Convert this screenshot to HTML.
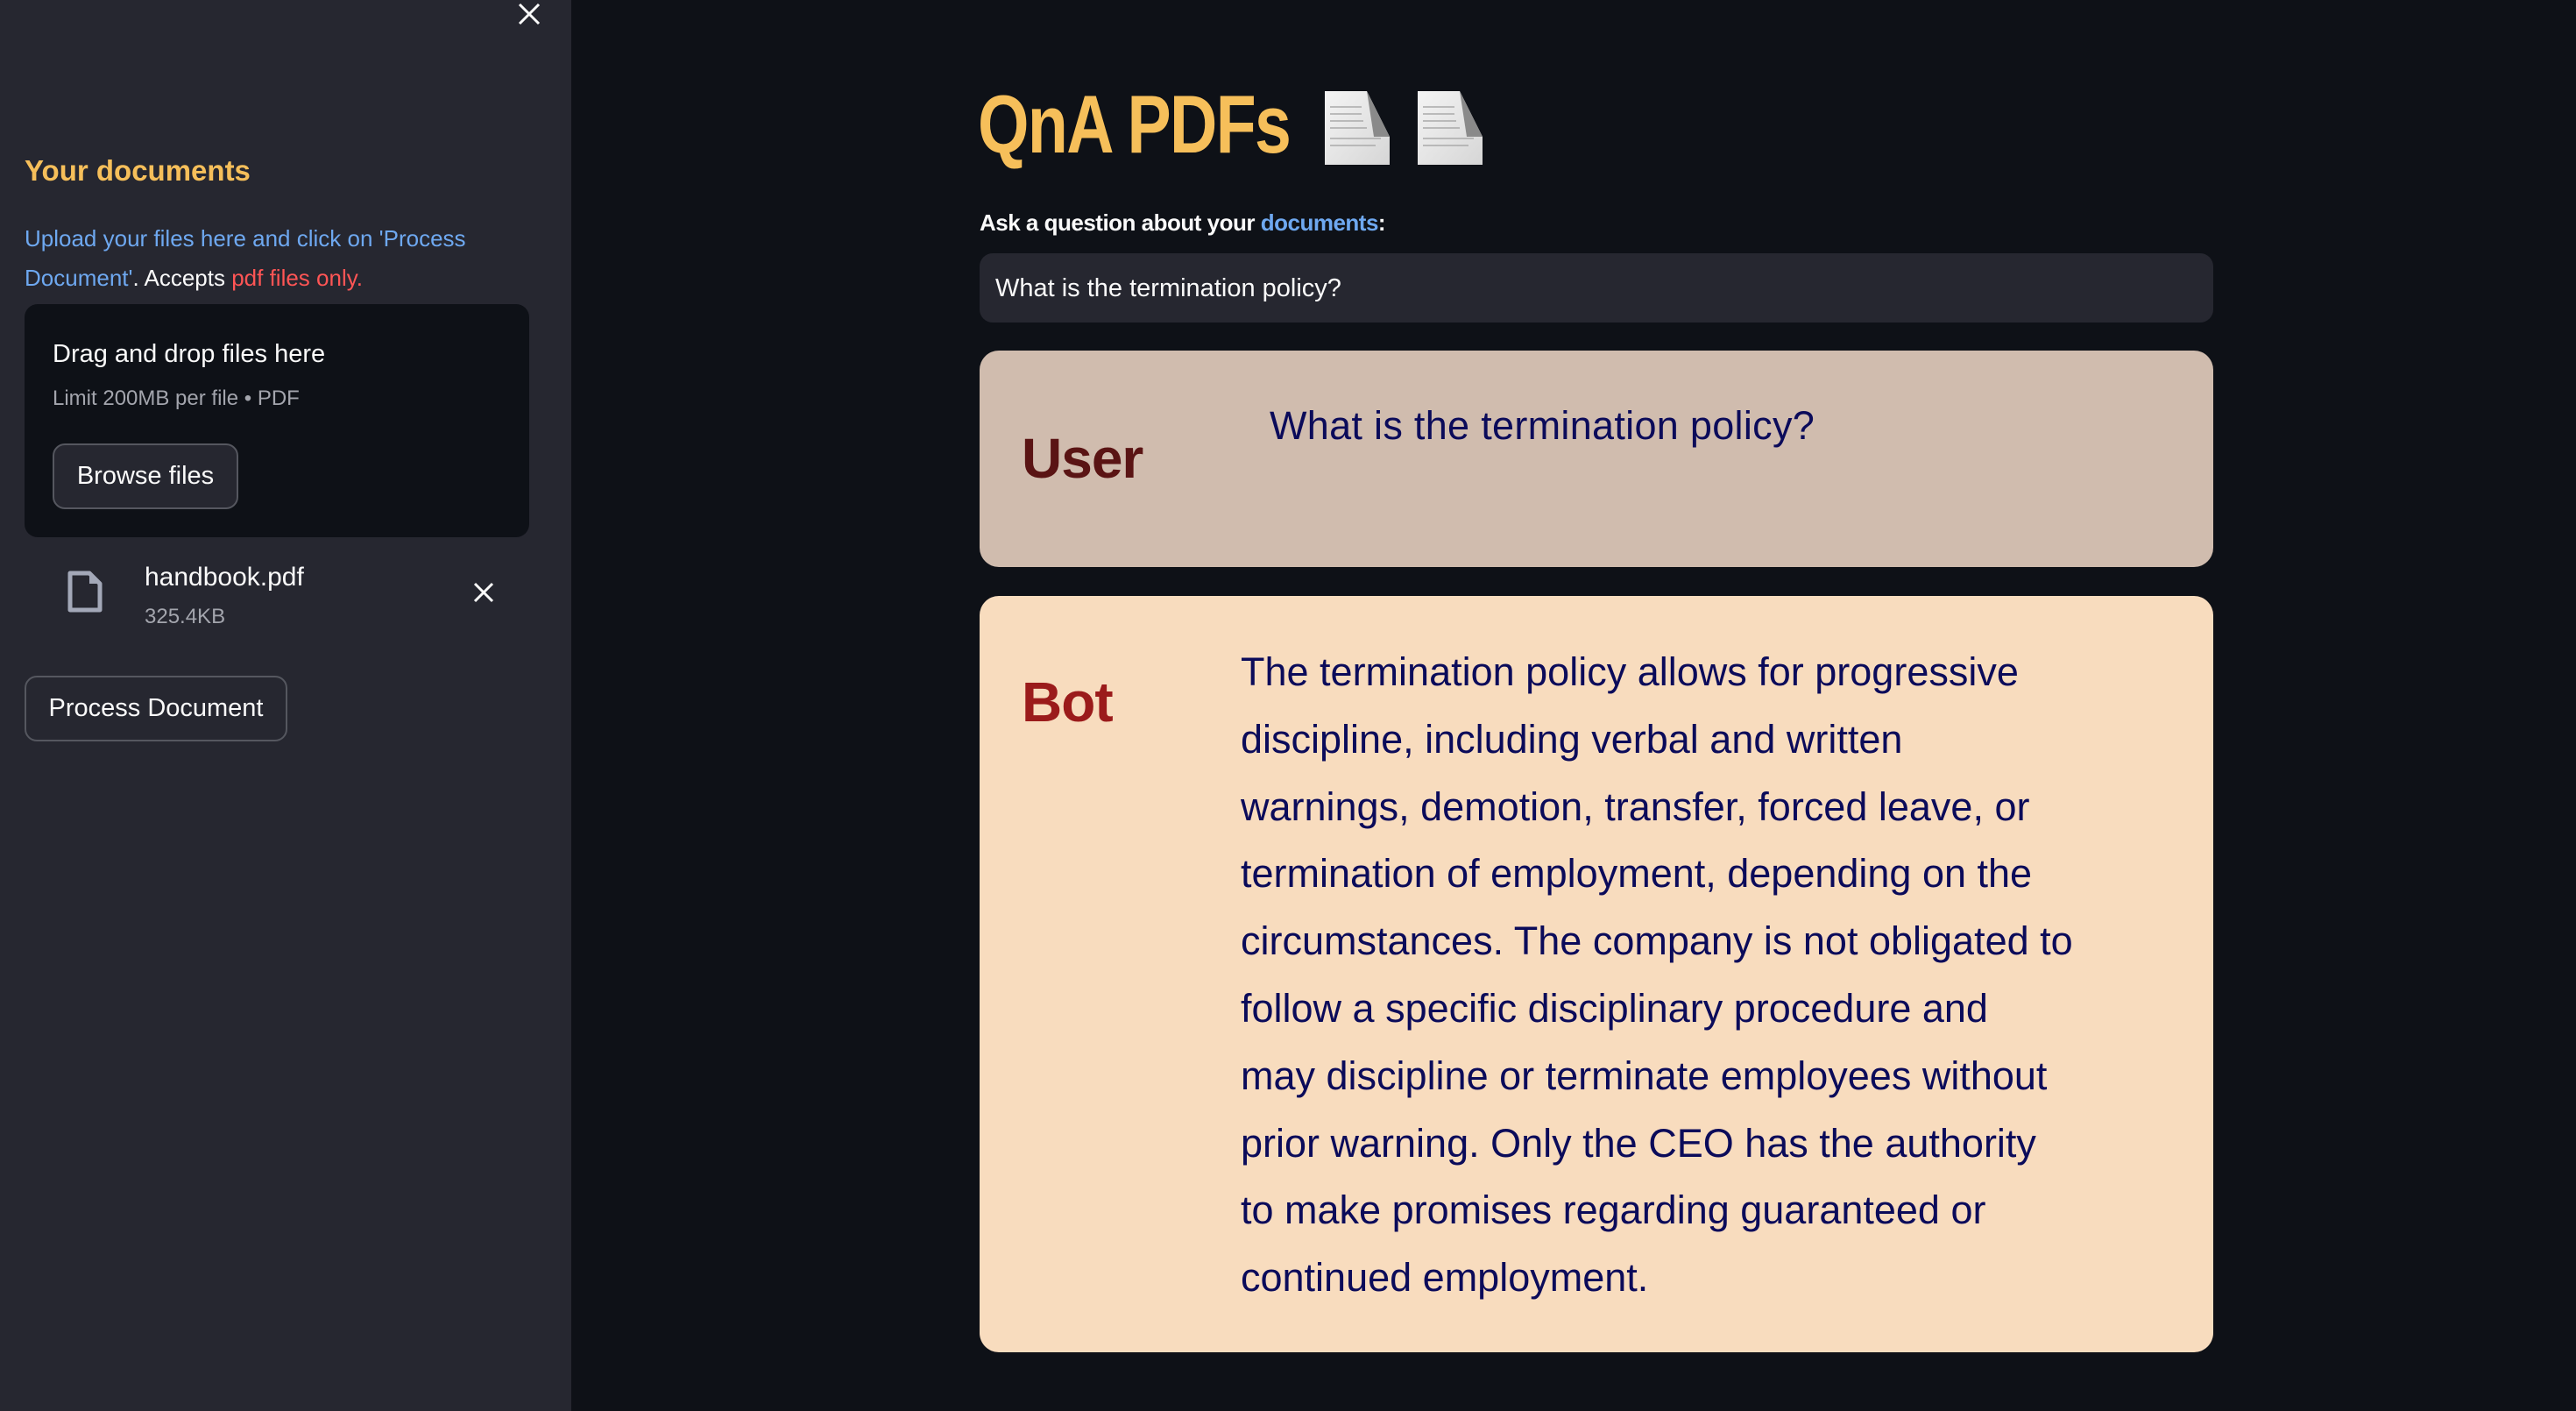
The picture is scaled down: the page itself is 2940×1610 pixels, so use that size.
<!DOCTYPE html>
<html><head><meta charset="utf-8"><style>
*{margin:0;padding:0;box-sizing:border-box}
body{width:2940px;height:1610px;background:#0e1117;font-family:"Liberation Sans",sans-serif;position:relative;overflow:hidden;color:#fafafa}
.abs{position:absolute;white-space:nowrap}
#side{position:absolute;left:0;top:0;width:652px;height:1610px;background:#262730}
.btn{position:absolute;border:2px solid #55575f;border-radius:14px;background:#262730;color:#fafafa;font-size:29px;display:flex;align-items:center;justify-content:center}
.bot p{font-size:45px;letter-spacing:0px;line-height:76.8px;color:#0b0b5a;white-space:nowrap}
</style></head><body>
<div id="side">
 <svg class="abs" style="left:590px;top:2px" width="28" height="28" viewBox="0 0 28 28"><path d="M3 3L25 25M25 3L3 25" stroke="#fafafa" stroke-width="3"/></svg>
 <div class="abs" style="left:28px;top:176px;font-size:33px;font-weight:bold;color:#f6bf5a">Your documents</div>
 <div class="abs" style="left:28px;top:250px;font-size:26px;line-height:45px;color:#6ea8f0">Upload your files here and click on 'Process<br>Document'<span style="color:#fafafa">. Accepts </span><span style="color:#ff5555">pdf files only.</span></div>
 <div class="abs" style="left:28px;top:347px;width:576px;height:266px;background:#0e1117;border-radius:15px"></div>
 <div class="abs" style="left:60px;top:388px;font-size:29px;color:#fafafa">Drag and drop files here</div>
 <div class="abs" style="left:60px;top:441px;font-size:24px;color:#a3a5ad">Limit 200MB per file • PDF</div>
 <div class="btn" style="left:60px;top:506px;width:212px;height:75px;">Browse files</div>
 <svg class="abs" style="left:76px;top:650px" width="42" height="50" viewBox="0 0 42 50"><path d="M4 4H26L38 16V46H4Z" fill="none" stroke="#a3a8b8" stroke-width="5" stroke-linejoin="round"/><path d="M26 4V16H38Z" fill="#a3a8b8"/></svg>
 <div class="abs" style="left:165px;top:642px;font-size:30px;color:#fafafa">handbook.pdf</div>
 <div class="abs" style="left:165px;top:690px;font-size:24px;color:#a3a5ad">325.4KB</div>
 <svg class="abs" style="left:540px;top:664px" width="24" height="24" viewBox="0 0 24 24"><path d="M2 2L22 22M22 2L2 22" stroke="#fafafa" stroke-width="3"/></svg>
 <div class="btn" style="left:28px;top:771px;width:300px;height:75px;">Process Document</div>
</div>
<div class="abs" style="left:1116px;top:88px;font-size:94px;font-weight:bold;color:#f6bf5a;letter-spacing:-2px;transform:scaleX(0.8);transform-origin:0 0">QnA PDFs</div>
<svg class="abs" style="left:1510px;top:102px" width="190" height="88" viewBox="0 0 190 88">
 <defs><linearGradient id="g" x1="0" y1="0" x2="1" y2="1"><stop offset="0" stop-color="#f4f4f4"/><stop offset="1" stop-color="#d6d6d6"/></linearGradient></defs>
 <path d="M2 2H50L76 54V86H2Z" fill="url(#g)"/><path d="M50 2L76 54H58Z" fill="#8a8a8a"/>
 <path d="M108 2H156L182 54V86H108Z" fill="url(#g)"/><path d="M156 2L182 54H164Z" fill="#8a8a8a"/>
 <g stroke="#aaa" stroke-width="1.5"><path d="M8 20H44M8 28H44M8 36H46M8 44H50M8 56H66M8 64H60M114 20H150M114 28H150M114 36H152M114 44H156M114 56H172M114 64H166"/></g>
</svg>
<div class="abs" style="left:1118px;top:239px;font-size:26px;font-weight:bold;color:#fafafa;letter-spacing:-0.5px">Ask a question about your <span style="color:#6ea8f0">documents</span>:</div>
<div class="abs" style="left:1118px;top:289px;width:1408px;height:79px;background:#262730;border-radius:15px"></div>
<div class="abs" style="left:1136px;top:313px;font-size:29px;color:#fafafa">What is the termination policy?</div>
<div class="abs" style="left:1118px;top:400px;width:1408px;height:247px;background:#d0bcae;border-radius:22px"></div>
<div class="abs" style="left:1166px;top:486px;font-size:64px;font-weight:bold;color:#5a1414;letter-spacing:-1px">User</div>
<div class="abs" style="left:1449px;top:460px;font-size:45px;color:#0b0b5a;letter-spacing:0.3px">What is the termination policy?</div>
<div class="abs" style="left:1118px;top:680px;width:1408px;height:863px;background:#f8dcbe;border-radius:22px"></div>
<div class="abs" style="left:1166px;top:764px;font-size:64px;font-weight:bold;color:#9b1b1b;letter-spacing:-1px">Bot</div>
<div class="abs bot" style="left:1416px;top:729px">
<p>The termination policy allows for progressive</p>
<p>discipline, including verbal and written</p>
<p>warnings, demotion, transfer, forced leave, or</p>
<p>termination of employment, depending on the</p>
<p>circumstances. The company is not obligated to</p>
<p>follow a specific disciplinary procedure and</p>
<p>may discipline or terminate employees without</p>
<p>prior warning. Only the CEO has the authority</p>
<p>to make promises regarding guaranteed or</p>
<p>continued employment.</p>
</div>
</body></html>
